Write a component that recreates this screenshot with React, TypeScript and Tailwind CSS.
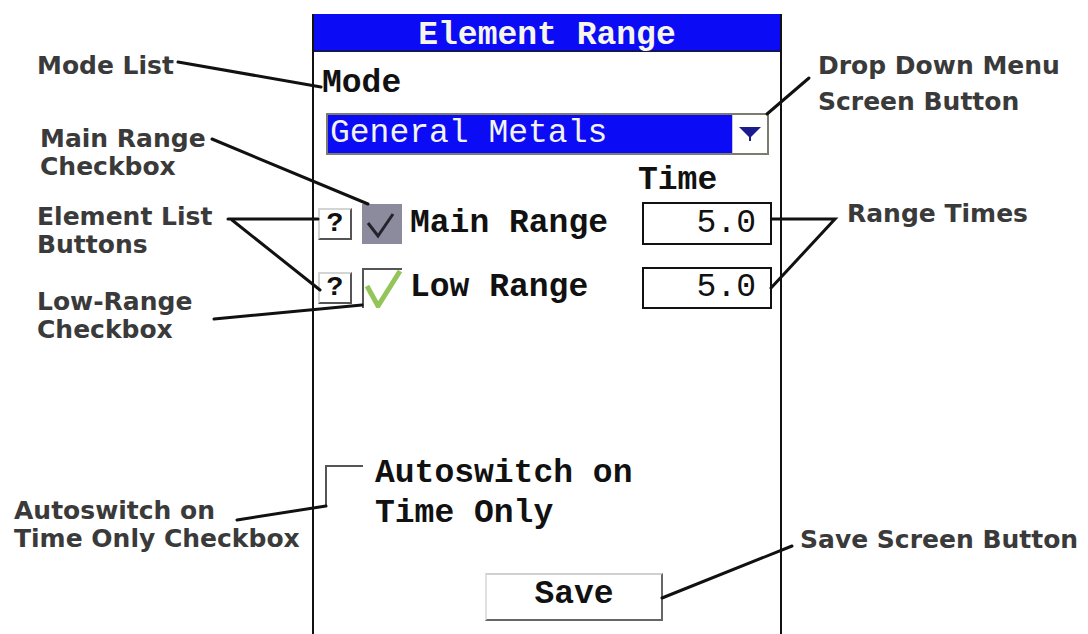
import React from "react";

const mono = "font-['Liberation_Mono','Courier_New',monospace]";
const label =
  "absolute font-['DejaVu_Sans',Verdana,sans-serif] font-bold text-[25px] leading-[28px] text-[#3a3a3a] whitespace-nowrap";

export default function App() {
  return (
    <div className="relative w-[1088px] h-[634px] bg-white overflow-hidden flex">
      <div className="w-[312px] shrink-0" />
      {/* Panel */}
      <div
        className={`w-[470px] shrink-0 mt-[14px] border-x-2 border-[#111] flex flex-col text-[33px] text-[#111] ${mono}`}
      >
        <div className="h-[38px] bg-[#0b0bf6] border-b-2 border-[#14145a] text-center font-bold text-[#f5f5ea] leading-[44px]">
          Element Range
        </div>
        <div className="mt-[13px] ml-[8px] font-bold leading-[38px]">Mode</div>
        <div className="mt-[10px] ml-[12px] w-[443px] h-[42px] border-2 border-[#7c7c70] flex">
          <div className="flex-1 bg-[#0b0bf6] text-[#f2f2f2] pl-[2px] leading-[38px] whitespace-nowrap">
            General Metals
          </div>
          <div className="w-[35px] bg-white border-l border-[#c8c8c8] flex items-start justify-center pt-[12px]">
            <svg width="22" height="14" viewBox="0 0 22 14">
              <polygon points="0,0 22,0 11,11" fill="#1c1c8c" />
              <rect x="10" y="9" width="2" height="5" fill="#1c1c8c" />
            </svg>
          </div>
        </div>
        <div className="mt-[11px] pl-[324px] font-bold leading-[30px]">Time</div>

        {/* Row 1 */}
        <div className="mt-[6px] h-[43px] flex items-center">
          <div className="ml-[4px] w-[34px] h-[32px] bg-white border-2 border-t-[#d4d4d4] border-l-[#d4d4d4] border-r-[#555] border-b-[#555] flex items-center justify-center text-[28px] font-bold leading-[28px]">
            ?
          </div>
          <div className="ml-[10px] w-[40px] h-[40px] bg-[#8b8b9d]">
            <svg width="40" height="40" viewBox="0 0 40 40">
              <polyline
                points="6,19 16,32 31,10"
                fill="none"
                stroke="#23232e"
                strokeWidth="3"
              />
            </svg>
          </div>
          <div className="ml-[8px] flex-1 font-bold leading-[38px] whitespace-nowrap">
            Main Range
          </div>
          <div className="mr-[8px] w-[130px] h-[43px] border-2 border-[#111] text-right pr-[14px] leading-[39px]">
            5.0
          </div>
        </div>

        {/* Row 2 */}
        <div className="mt-[22px] h-[42px] flex items-center">
          <div className="ml-[4px] w-[34px] h-[32px] bg-white border-2 border-t-[#d4d4d4] border-l-[#d4d4d4] border-r-[#555] border-b-[#555] flex items-center justify-center text-[28px] font-bold leading-[28px]">
            ?
          </div>
          <div className="ml-[10px] w-[40px] h-[40px] bg-white border-t-2 border-l-2 border-[#555]">
            <svg width="40" height="40" viewBox="0 0 40 40" className="-mt-[2px] -ml-[2px]">
              <polyline
                points="5,18 16,38 38,3"
                fill="none"
                stroke="#94c55a"
                strokeWidth="5"
              />
            </svg>
          </div>
          <div className="ml-[8px] flex-1 font-bold leading-[38px] whitespace-nowrap">
            Low Range
          </div>
          <div className="mr-[8px] w-[130px] h-[42px] border-2 border-[#111] text-right pr-[14px] leading-[38px]">
            5.0
          </div>
        </div>

        {/* Autoswitch */}
        <div className="mt-[145px] ml-[11px] flex items-start">
          <div className="mt-[11px] w-[38px] h-[42px] border-t-2 border-l-2 border-[#555]" />
          <div className="ml-[12px] font-bold leading-[40px] whitespace-nowrap">
            Autoswitch on
            <br />
            Time Only
          </div>
        </div>

        {/* Save */}
        <div className="mt-[39px] ml-[171px] w-[178px] h-[48px] border-2 border-t-[#d0d0d0] border-l-[#e0e0e0] border-r-[#666] border-b-[#666] flex items-center justify-center">
          <span className="font-bold leading-[34px] pb-[4px]">Save</span>
        </div>
      </div>

      {/* Callout labels */}
      <div className={`${label} left-[37px] top-[52px]`}>Mode List</div>
      <div className={`${label} left-[40px] top-[125px]`}>
        Main Range
        <br />
        Checkbox
      </div>
      <div className={`${label} left-[37px] top-[203px] leading-[27px]`}>
        Element List
        <br />
        Buttons
      </div>
      <div className={`${label} left-[37px] top-[288px] leading-[27px]`}>
        Low-Range
        <br />
        Checkbox
      </div>
      <div className={`${label} left-[14px] top-[497px]`}>
        Autoswitch on
        <br />
        Time Only Checkbox
      </div>
      <div className={`${label} left-[818px] top-[48px] leading-[36px]`}>
        Drop Down Menu
        <br />
        Screen Button
      </div>
      <div className={`${label} left-[847px] top-[200px]`}>Range Times</div>
      <div className={`${label} left-[800px] top-[526px]`}>Save Screen Button</div>

      {/* Callout lines */}
      <svg
        className="absolute left-0 top-0 pointer-events-none"
        width="1088"
        height="634"
        viewBox="0 0 1088 634"
      >
        <g fill="none" stroke="#111" strokeWidth="3" strokeLinecap="round">
          <line x1="178" y1="62" x2="321" y2="87" />
          <line x1="212" y1="139" x2="368" y2="204" />
          <line x1="228" y1="219" x2="318" y2="219" />
          <line x1="232" y1="220" x2="320" y2="290" />
          <line x1="214" y1="319" x2="362" y2="305" />
          <line x1="237" y1="520" x2="326" y2="506" />
          <line x1="809" y1="78" x2="767" y2="114" />
          <polyline points="772,219 835,219 771,288" />
          <line x1="662" y1="598" x2="792" y2="546" />
        </g>
      </svg>
    </div>
  );
}
